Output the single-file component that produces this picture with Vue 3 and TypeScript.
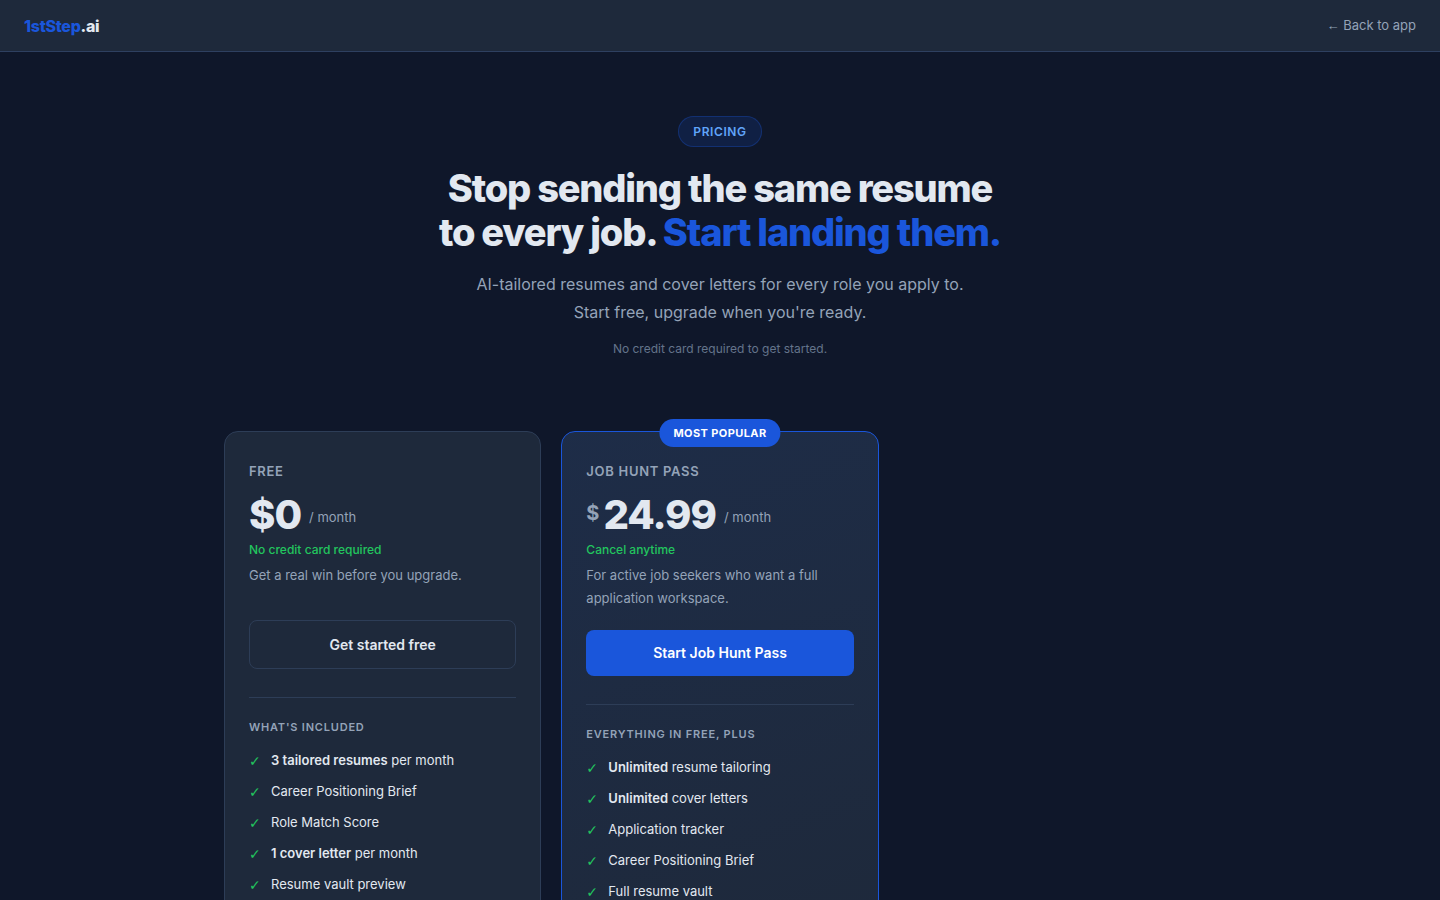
<script setup lang="ts">
interface Feature {
  strong?: string
  text: string
}

interface Plan {
  id: string
  name: string
  currency?: string
  amount: string
  note: string
  description: string
  action: string
  listTitle: string
  badge?: string
  features: Feature[]
}

const plans: Plan[] = [
  {
    id: 'free',
    name: 'Free',
    amount: '$0',
    note: 'No credit card required',
    description: 'Get a real win before you upgrade.',
    action: 'Get started free',
    listTitle: "What's included",
    features: [
      { strong: '3 tailored resumes', text: ' per month' },
      { text: 'Career Positioning Brief' },
      { text: 'Role Match Score' },
      { strong: '1 cover letter', text: ' per month' },
      { text: 'Resume vault preview' },
    ],
  },
  {
    id: 'pass',
    name: 'Job Hunt Pass',
    currency: '$',
    amount: '24.99',
    note: 'Cancel anytime',
    description: 'For active job seekers who want a full application workspace.',
    action: 'Start Job Hunt Pass',
    listTitle: 'Everything in Free, plus',
    badge: 'Most popular',
    features: [
      { strong: 'Unlimited', text: ' resume tailoring' },
      { strong: 'Unlimited', text: ' cover letters' },
      { text: 'Application tracker' },
      { text: 'Career Positioning Brief' },
      { text: 'Full resume vault' },
    ],
  },
]
</script>

<template>
  <div class="page">
    <header class="topbar">
      <a class="logo" href="#"><span class="logo-accent">1stStep</span>.ai</a>
      <a class="back" href="#"><span class="arrow">←</span> Back to app</a>
    </header>

    <main>
      <section class="hero">
        <span class="tag">Pricing</span>
        <h1>Stop sending the same resume<br />to every job. <span class="accent">Start landing them.</span></h1>
        <p class="lead">AI-tailored resumes and cover letters for every role you apply to.<br />Start free, upgrade when you're ready.</p>
        <p class="hint">No credit card required to get started.</p>
      </section>

      <section class="plans">
        <article v-for="plan in plans" :key="plan.id" class="card" :class="{ featured: plan.badge }">
          <span v-if="plan.badge" class="badge">{{ plan.badge }}</span>
          <h2 class="name">{{ plan.name }}</h2>
          <div class="price">
            <span v-if="plan.currency" class="currency">{{ plan.currency }}</span>
            <span class="amount">{{ plan.amount }}</span>
            <span class="period">/ month</span>
          </div>
          <p class="note">{{ plan.note }}</p>
          <p class="description">{{ plan.description }}</p>
          <button type="button" class="action">{{ plan.action }}</button>
          <hr class="divider" />
          <h3 class="list-title">{{ plan.listTitle }}</h3>
          <ul class="features">
            <li v-for="feature in plan.features" :key="(feature.strong ?? '') + feature.text">
              <span class="check" aria-hidden="true">✓</span>
              <span><strong v-if="feature.strong">{{ feature.strong }}</strong>{{ feature.text }}</span>
            </li>
          </ul>
        </article>
      </section>
    </main>
  </div>
</template>

<style>
body {
  margin: 0;
  background: #0f172a;
}
</style>

<style scoped>
.page {
  min-height: 100vh;
  background: #0f172a;
  color: #e2e8f0;
  font-family: Inter, "Liberation Sans", sans-serif;
  font-size: 16px;
  line-height: 28px;
}

.page *,
.page *::before {
  box-sizing: border-box;
}

h1,
h2,
h3,
p,
ul {
  margin: 0;
  padding: 0;
}

.topbar {
  display: flex;
  align-items: center;
  justify-content: space-between;
  height: 52px;
  padding: 0 24px;
  background: #1e293b;
  border-bottom: 1px solid #2e4060;
}

.logo {
  color: #e2e8f0;
  font-size: 16px;
  font-weight: 800;
  letter-spacing: -0.3px;
  text-decoration: none;
}

.logo-accent,
.accent {
  color: #1a56db;
}

.back {
  color: #94a3b8;
  font-size: 13px;
  line-height: 23px;
  text-decoration: none;
}

.arrow {
  font-family: "Liberation Sans", sans-serif;
}

.hero {
  display: flex;
  flex-direction: column;
  align-items: center;
  padding: 64px 24px 48px;
  text-align: center;
}

.tag {
  margin-bottom: 19px;
  padding: 4px 14px;
  border: 1px solid rgba(26, 86, 219, 0.3);
  border-radius: 20px;
  background: rgba(26, 86, 219, 0.15);
  color: #60a5fa;
  font-size: 12px;
  font-weight: 600;
  line-height: 21px;
  letter-spacing: 0.6px;
  text-transform: uppercase;
}

h1 {
  margin-bottom: 16px;
  font-size: 38px;
  font-weight: 800;
  line-height: 44px;
  letter-spacing: -1.2px;
}

.lead {
  margin-bottom: 12px;
  color: #94a3b8;
}

.hint {
  color: #64748b;
  font-size: 12px;
  line-height: 21px;
}

.plans {
  display: grid;
  grid-template-columns: repeat(3, 1fr);
  gap: 20px;
  max-width: 1040px;
  box-sizing: border-box;
  margin: 0 auto;
  padding: 24px 24px 64px;
}

.card {
  position: relative;
  padding: 28px 24px;
  border: 1px solid #2d3d57;
  border-radius: 14px;
  background: #1e293b;
}

.card.featured {
  border-color: #1a56db;
  background: linear-gradient(160deg, rgba(26, 86, 219, 0.08) 0%, rgba(26, 86, 219, 0) 100%), #1e293b;
}

.badge {
  position: absolute;
  top: -13px;
  left: 50%;
  transform: translateX(-50%);
  padding: 4px 14px;
  border-radius: 20px;
  background: #1a56db;
  color: #ffffff;
  font-size: 11px;
  font-weight: 700;
  line-height: 20px;
  letter-spacing: 0.4px;
  text-transform: uppercase;
  white-space: nowrap;
}

.name {
  margin-bottom: 8px;
  color: #94a3b8;
  font-size: 13px;
  font-weight: 600;
  line-height: 23px;
  letter-spacing: 0.7px;
  text-transform: uppercase;
}

.price {
  display: flex;
  align-items: flex-end;
  gap: 4px;
}

.amount {
  font-size: 40px;
  font-weight: 800;
  line-height: 48px;
  letter-spacing: -1px;
}

.currency {
  align-self: flex-start;
  padding-top: 8px;
  color: #94a3b8;
  font-size: 20px;
  font-weight: 700;
  line-height: 28px;
}

.period {
  padding: 0 0 10px 4px;
  color: #94a3b8;
  font-size: 13px;
  line-height: 23px;
}

.note {
  margin-bottom: 4px;
  color: #22c55e;
  font-size: 12px;
  font-weight: 500;
  line-height: 21px;
}

.description {
  min-height: 36px;
  margin-bottom: 20px;
  color: #94a3b8;
  font-size: 13px;
  line-height: 23px;
}

.action {
  display: block;
  width: 100%;
  padding: 11px 16px;
  border: 1px solid #2d3d57;
  border-radius: 8px;
  background: transparent;
  color: #e2e8f0;
  font-family: inherit;
  font-size: 14px;
  font-weight: 600;
  line-height: 25px;
}

.featured .action {
  padding: 12px 16px;
  border: 0;
  background: #1a56db;
  color: #ffffff;
  line-height: 22px;
}

.divider {
  height: 1px;
  margin: 28px 0 20px;
  border: 0;
  background: #2d3d57;
}

.list-title {
  margin-bottom: 12px;
  color: #94a3b8;
  font-size: 11px;
  font-weight: 600;
  line-height: 19px;
  letter-spacing: 0.8px;
  text-transform: uppercase;
}

.features {
  display: flex;
  flex-direction: column;
  gap: 8px;
  list-style: none;
  font-size: 13px;
  line-height: 23px;
}

.features li {
  display: flex;
  align-items: flex-start;
  gap: 10px;
}

.features strong {
  font-weight: 600;
}

.check {
  flex: none;
  width: 12px;
  padding-top: 2px;
  color: #22c55e;
  font-family: "DejaVu Sans", sans-serif;
  font-size: 14px;
  line-height: 21px;
}
</style>
